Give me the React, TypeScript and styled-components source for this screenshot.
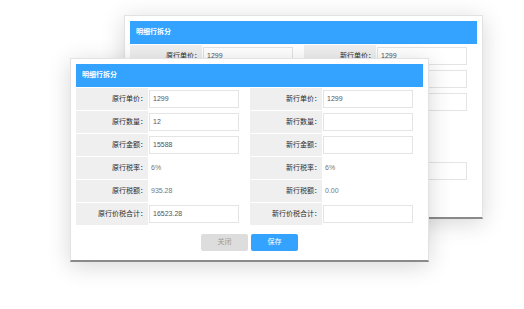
import styled, { createGlobalStyle } from 'styled-components'

type Field = { label: string; value: string; input: boolean }

const leftFields: Field[] = [
  { label: '原行单价：', value: '1299', input: true },
  { label: '原行数量：', value: '12', input: true },
  { label: '原行金额：', value: '15588', input: true },
  { label: '原行税率：', value: '6%', input: false },
  { label: '原行税额：', value: '935.28', input: false },
  { label: '原行价税合计：', value: '16523.28', input: true },
]

const rightFields: Field[] = [
  { label: '新行单价：', value: '1299', input: true },
  { label: '新行数量：', value: '', input: true },
  { label: '新行金额：', value: '', input: true },
  { label: '新行税率：', value: '6%', input: false },
  { label: '新行税额：', value: '0.00', input: false },
  { label: '新行价税合计：', value: '', input: true },
]

const GlobalStyle = createGlobalStyle`
  html, body {
    margin: 0;
    padding: 0;
    background: #fff;
  }
  body {
    font-family: "Liberation Sans", "Noto Sans CJK SC", sans-serif;
    line-height: 1.2;
  }
`

const Stage = styled.div`
  position: relative;
  width: 524px;
  height: 309px;
  overflow: hidden;
  background: #fff;
`

// the two dialogs are stacked windows, so they are placed on the canvas
const Dialog = styled.div<{ $left: number; $top: number }>`
  position: absolute;
  left: ${(p) => p.$left}px;
  top: ${(p) => p.$top}px;
  width: 359px;
  box-sizing: border-box;
  padding: 5px 5px 9px;
  background: #fff;
  border: 1px solid #e2e2e2;
  border-bottom: 2px solid #8a8a8a;
  box-shadow: 0 4px 22px rgba(0, 0, 0, 0.16);
  display: flex;
  flex-direction: column;
`

const Header = styled.div`
  height: 23px;
  background: #33a3ff;
  color: #fff;
  font-size: 7px;
  font-weight: bold;
  display: flex;
  align-items: center;
  padding-left: 6px;
`

const Form = styled.div`
  display: grid;
  grid-template-columns: 1fr 1fr;
  column-gap: 1px;
  margin-top: 1px;
`

const Column = styled.div`
  display: flex;
  flex-direction: column;
  gap: 1px;
`

const Row = styled.div`
  display: grid;
  grid-template-columns: 72px 1fr;
  height: 22px;
`

const Label = styled.div`
  background: #efefef;
  color: #2a2a2a;
  font-size: 7px;
  display: flex;
  align-items: center;
  justify-content: flex-end;
  padding-right: 1px;
`

const Value = styled.div`
  display: flex;
  align-items: center;
  padding-left: 1px;
  font-size: 7px;
  color: #777;
`

const Input = styled.div`
  width: 90px;
  height: 18px;
  box-sizing: border-box;
  border: 1px solid #e4e4e4;
  background: #fff;
  display: flex;
  align-items: center;
  padding-left: 3px;
  font-size: 7px;
  color: #555;
`

const PlainValue = styled.span`
  padding-left: 2px;
`

const Actions = styled.div`
  display: flex;
  justify-content: center;
  gap: 3px;
  margin-top: 9px;
`

const Button = styled.div<{ $primary?: boolean }>`
  width: 47px;
  height: 17px;
  border-radius: 2px;
  display: flex;
  align-items: center;
  justify-content: center;
  font-size: 7px;
  background: ${(p) => (p.$primary ? '#33a3ff' : '#dddddd')};
  color: ${(p) => (p.$primary ? '#fff' : '#999')};
`

const FieldColumn = ({ fields }: { fields: Field[] }) => (
  <Column>
    {fields.map((f) => (
      <Row key={f.label}>
        <Label>{f.label}</Label>
        <Value>
          {f.input ? <Input>{f.value}</Input> : <PlainValue>{f.value}</PlainValue>}
        </Value>
      </Row>
    ))}
  </Column>
)

const SplitDialog = ({ left, top }: { left: number; top: number }) => (
  <Dialog $left={left} $top={top}>
    <Header>明细行拆分</Header>
    <Form>
      <FieldColumn fields={leftFields} />
      <FieldColumn fields={rightFields} />
    </Form>
    <Actions>
      <Button>关闭</Button>
      <Button $primary>保存</Button>
    </Actions>
  </Dialog>
)

export default function App() {
  return (
    <>
      <GlobalStyle />
      <Stage>
        <SplitDialog left={124} top={15} />
        <SplitDialog left={70} top={58} />
      </Stage>
    </>
  )
}
